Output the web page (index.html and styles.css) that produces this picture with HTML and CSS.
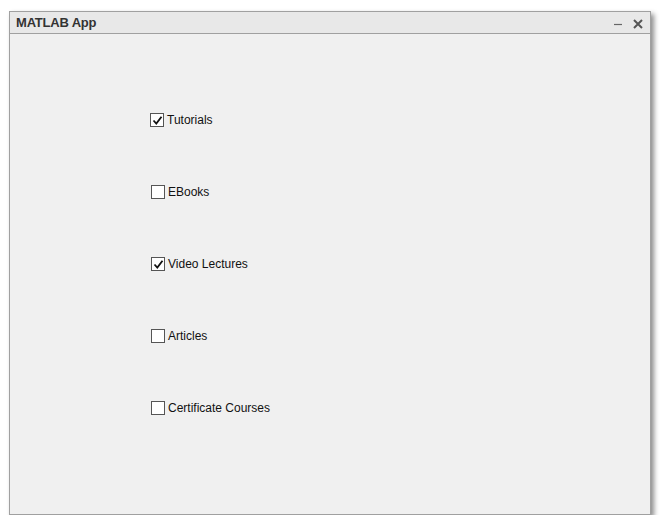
FILE: index.html
```html
<!DOCTYPE html>
<html>
<head>
<meta charset="utf-8">
<link rel="stylesheet" href="styles.css">
</head>
<body>
<div class="window">
  <div class="titlebar">
    <span class="title">MATLAB App</span>
    <span class="controls">
      <svg class="min" width="10" height="10" viewBox="0 0 10 10"><line x1="1" y1="5.5" x2="9" y2="5.5" stroke="#666" stroke-width="1.2"/></svg>
      <svg class="close" width="12" height="12" viewBox="0 0 12 12"><path d="M2 2 L10 10 M10 2 L2 10" stroke="#555" stroke-width="2"/></svg>
    </span>
  </div>
  <div class="content">
    <label class="row"><span class="box checked"><svg width="11" height="11" viewBox="0 0 11 11"><path d="M1.5 5.5 L4.3 8.5 L9.5 1.8" fill="none" stroke="#111" stroke-width="1.8"/></svg></span><span class="text">Tutorials</span></label>
    <label class="row shift"><span class="box"></span><span class="text">EBooks</span></label>
    <label class="row shift"><span class="box checked"><svg width="11" height="11" viewBox="0 0 11 11"><path d="M1.5 5.5 L4.3 8.5 L9.5 1.8" fill="none" stroke="#111" stroke-width="1.8"/></svg></span><span class="text">Video Lectures</span></label>
    <label class="row shift"><span class="box"></span><span class="text">Articles</span></label>
    <label class="row shift"><span class="box"></span><span class="text">Certificate Courses</span></label>
  </div>
</div>
</body>
</html>
```
FILE: styles.css
```css
html, body {
  margin: 0;
  padding: 0;
  background: #ffffff;
  font-family: "Liberation Sans", Arial, sans-serif;
}
body {
  padding: 11px 0 0 9px;
}
.window {
  width: 640px;
  height: 502px;
  border: 1px solid #a0a0a0;
  background: #f0f0f0;
  box-shadow: 3px 3px 5px rgba(0,0,0,0.45);
  display: flex;
  flex-direction: column;
}
.titlebar {
  height: 21px;
  background: #e8e8e8;
  border-bottom: 1px solid #a0a0a0;
  display: flex;
  align-items: center;
  justify-content: space-between;
  padding: 0 6px 0 6px;
}
.title {
  font-weight: bold;
  font-size: 13px;
  color: #333;
  letter-spacing: -0.2px;
}
.controls {
  display: flex;
  align-items: center;
  gap: 9px;
  padding-top: 2px;
}
.content {
  display: flex;
  flex-direction: column;
  gap: 58px;
  padding: 79px 0 0 140px;
}
.row {
  display: flex;
  align-items: center;
  height: 14px;
  font-size: 12px;
  color: #111;
}
.row.shift {
  margin-left: 1px;
}
.box {
  width: 12px;
  height: 12px;
  border: 1px solid #555;
  background: #fff;
  margin-right: 3px;
  display: flex;
  align-items: center;
  justify-content: center;
  box-sizing: content-box;
}
.text {
  line-height: 14px;
}
```
